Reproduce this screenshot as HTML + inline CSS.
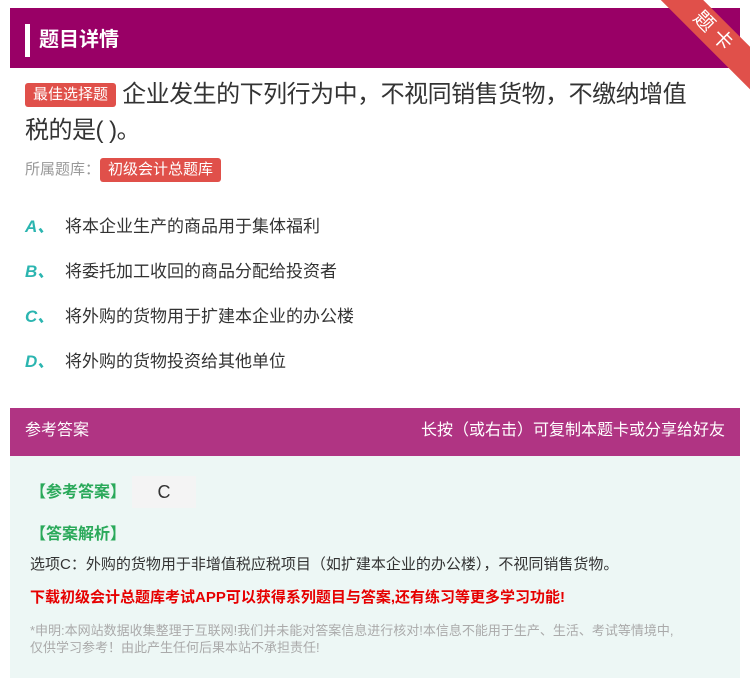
<!DOCTYPE html>
<html><head><meta charset="utf-8"><style>
body{margin:0;width:750px;height:678px;background:#fff;font-family:"Liberation Sans","Noto Sans CJK SC",sans-serif;position:relative;overflow:hidden}
.hd{position:absolute;left:10px;top:8px;width:730px;height:60px;background:#990066}
.hd .bar{position:absolute;left:15px;top:16px;width:5px;height:33px;background:#fff}
.hd .t{position:absolute;left:29px;top:14px;color:#fff;font-size:20px;font-weight:bold;line-height:36px}
.rib{position:absolute;right:-30px;top:18px;width:130px;height:30px;background:#e0504a;color:#fff;transform:rotate(45deg);text-align:center;font-size:20px;line-height:30px;letter-spacing:6px}
.q{position:absolute;left:25px;top:77px;width:680px;font-size:24px;color:#333;line-height:36px;letter-spacing:-0.5px}
.tag{display:inline-block;background:#e0504a;color:#fff;font-size:15px;line-height:24px;padding:0 8px;border-radius:3px;vertical-align:3px;letter-spacing:0}
.lib{position:absolute;left:25px;top:158px;font-size:15px;color:#999;line-height:24px}
.opt{position:absolute;left:25px;font-size:17px;color:#333}
.opt b{color:#2bb5b0;font-style:italic;display:inline-block;width:40px}
.ah{position:absolute;left:10px;top:408px;width:730px;height:48px;background:#b03483;color:#fff;font-size:16px;line-height:46px}
.ab{position:absolute;left:10px;top:456px;width:730px;height:222px;background:#edf7f5}
.g{color:#2aa95a;font-weight:bold;font-size:16px;position:absolute}
</style></head><body>
<div class="hd"><div class="bar"></div><div class="t">题目详情</div></div>
<div class="rib">题卡</div>
<div class="q"><span class="tag">最佳选择题</span> 企业发生的下列行为中，不视同销售货物，不缴纳增值税的是( )。</div>
<div class="lib">所属题库：<span class="tag" style="vertical-align:0">初级会计总题库</span></div>
<div class="opt" style="top:212px"><b>A、</b>将本企业生产的商品用于集体福利</div>
<div class="opt" style="top:257px"><b>B、</b>将委托加工收回的商品分配给投资者</div>
<div class="opt" style="top:302px"><b>C、</b>将外购的货物用于扩建本企业的办公楼</div>
<div class="opt" style="top:347px"><b>D、</b>将外购的货物投资给其他单位</div>
<div class="ah"><span style="position:absolute;left:15px">参考答案</span><span style="position:absolute;right:15px">长按（或右击）可复制本题卡或分享给好友</span></div>
<div class="ab">
<div class="g" style="left:20px;top:22px">【参考答案】</div>
<div style="position:absolute;left:122px;top:20px;width:64px;height:32px;background:#f4f4f4;font-size:18px;color:#333;text-align:center;line-height:32px">C</div>
<div class="g" style="left:20px;top:64px">【答案解析】</div>
<div style="position:absolute;left:20px;top:97px;font-size:15px;color:#333">选项C：外购的货物用于非增值税应税项目（如扩建本企业的办公楼），不视同销售货物。</div>
<div style="position:absolute;left:20px;top:130px;font-size:15px;color:#e60000;font-weight:bold">下载初级会计总题库考试APP可以获得系列题目与答案,还有练习等更多学习功能!</div>
<div style="position:absolute;left:20px;top:166px;width:655px;font-size:13px;color:#aaa;line-height:17px">*申明:本网站数据收集整理于互联网!我们并未能对答案信息进行核对!本信息不能用于生产、生活、考试等情境中,仅供学习参考！由此产生任何后果本站不承担责任!</div>
</div>
</body></html>
